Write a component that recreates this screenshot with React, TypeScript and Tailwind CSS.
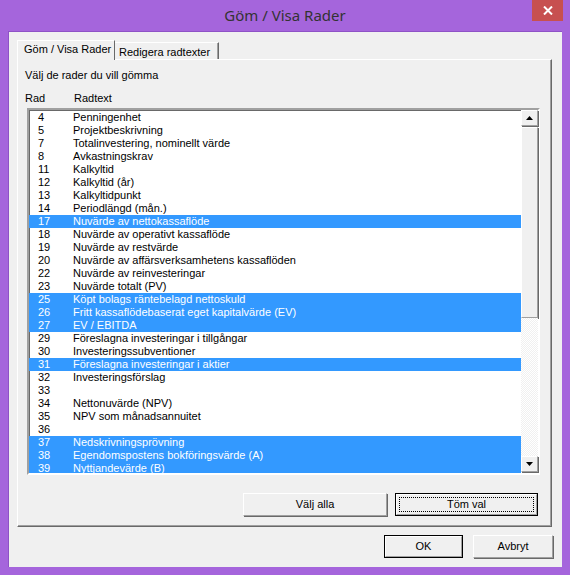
import { type ReactNode } from "react";

type Row = { n: number; text: string; sel?: boolean };

const rows: Row[] = [
  { n: 4, text: "Penningenhet" },
  { n: 5, text: "Projektbeskrivning" },
  { n: 7, text: "Totalinvestering, nominellt värde" },
  { n: 8, text: "Avkastningskrav" },
  { n: 11, text: "Kalkyltid" },
  { n: 12, text: "Kalkyltid (år)" },
  { n: 13, text: "Kalkyltidpunkt" },
  { n: 14, text: "Periodlängd (mån.)" },
  { n: 17, text: "Nuvärde av nettokassaflöde", sel: true },
  { n: 18, text: "Nuvärde av operativt kassaflöde" },
  { n: 19, text: "Nuvärde av restvärde" },
  { n: 20, text: "Nuvärde av affärsverksamhetens kassaflöden" },
  { n: 22, text: "Nuvärde av reinvesteringar" },
  { n: 23, text: "Nuvärde totalt (PV)" },
  { n: 25, text: "Köpt bolags räntebelagd nettoskuld", sel: true },
  { n: 26, text: "Fritt kassaflödebaserat eget kapitalvärde (EV)", sel: true },
  { n: 27, text: "EV / EBITDA", sel: true },
  { n: 29, text: "Föreslagna investeringar i tillgångar" },
  { n: 30, text: "Investeringssubventioner" },
  { n: 31, text: "Föreslagna investeringar i aktier", sel: true },
  { n: 32, text: "Investeringsförslag" },
  { n: 33, text: "" },
  { n: 34, text: "Nettonuvärde (NPV)" },
  { n: 35, text: "NPV som månadsannuitet" },
  { n: 36, text: "" },
  { n: 37, text: "Nedskrivningsprövning", sel: true },
  { n: 38, text: "Egendomspostens bokföringsvärde (A)", sel: true },
  { n: 39, text: "Nyttjandevärde (B)", sel: true },
];

// classic raised 3D button face
function Raised({ className = "", children }: { className?: string; children?: ReactNode }) {
  return (
    <div
      className={`bg-[#f0f0f0] border border-t-white border-l-white border-r-[#a0a0a0] border-b-[#a0a0a0] shadow-[1px_1px_0_#696969] ${className}`}
    >
      {children}
    </div>
  );
}

function Btn({ label, def, focus, className = "" }: { label: string; def?: boolean; focus?: boolean; className?: string }) {
  return (
    <div className={`h-[23px] ${def ? "border border-black" : ""} ${className}`}>
      <div
        className={`h-full bg-[#f0f0f0] border border-t-white border-l-white border-r-[#a0a0a0] border-b-[#a0a0a0] ${
          def ? "" : "shadow-[1px_1px_0_#696969]"
        } flex items-center justify-center p-[2px]`}
      >
        <div
          className={`w-full h-full flex items-center justify-center ${focus ? "border border-dotted border-black" : ""}`}
        >
          {label}
        </div>
      </div>
    </div>
  );
}

function Arrow({ up }: { up?: boolean }) {
  return (
    <svg width="7" height="4" viewBox="0 0 7 4">
      {up ? <polygon points="0,4 7,4 3.5,0" fill="#000" /> : <polygon points="0,0 7,0 3.5,4" fill="#000" />}
    </svg>
  );
}

export default function App() {
  return (
    <div
      className="w-[570px] h-[575px] bg-[#a565dc] flex flex-col text-[11px] text-black"
      style={{ fontFamily: '"Liberation Sans", Arial, sans-serif' }}
    >
      {/* Title bar */}
      <div className="h-[31px] flex items-start shrink-0">
        <div className="w-[38px]" />
        <div
          className="flex-1 text-center text-[15px] leading-[30px] text-[#333]"
          style={{ fontFamily: '"Noto Sans", "Open Sans", sans-serif' }}
        >
          Göm / Visa Rader
        </div>
        <div className="w-[31px] h-[21px] mr-[7px] bg-[#c75050] flex items-center justify-center">
          <svg width="10" height="9" viewBox="0 0 10 9">
            <path d="M1 0.5 L9 8.5 M9 0.5 L1 8.5" stroke="#fff" strokeWidth="2" />
          </svg>
        </div>
      </div>

      {/* Client area */}
      <div className="ml-[8px] w-[554px] h-[536px] bg-[#f0f0f0] border-t border-l border-[#8e52c6] flex flex-col">
        {/* Tabs */}
        <div className="flex items-end ml-[8px] mt-[8px] h-[19px]">
          <div className="relative z-10 h-[20px] -mb-px w-[98px] bg-[#f0f0f0] border-t border-l border-white border-r border-r-[#696969] pl-[6px] leading-[17px]">
            Göm / Visa Rader
          </div>
          <div className="h-[17px] w-[104px] border-t border-white border-r border-r-[#696969] shadow-[inset_-1px_0_0_#a0a0a0] pl-[4px] leading-[16px] pt-[1px]">
            Redigera radtexter
          </div>
        </div>

        {/* Tab panel */}
        <div className="ml-[8px] w-[535px] h-[468px] border border-t-white border-l-white border-r-[#696969] border-b-[#696969] shadow-[inset_-1px_-1px_0_#a0a0a0] flex flex-col">
          <div className="mt-[9px] ml-[7px] leading-[13px]">Välj de rader du vill gömma</div>
          <div className="mt-[10px] ml-[7px] flex leading-[13px]">
            <div className="w-[49px]">Rad</div>
            <div>Radtext</div>
          </div>

          {/* List box */}
          <div className="mt-[3px] ml-[9px] w-[513px] h-[367px] border-2 border-t-[#a0a0a0] border-l-[#a0a0a0] border-r-white border-b-white shadow-[inset_1px_1px_0_#696969] bg-white flex">
            <div className="flex-1 overflow-hidden pt-px">
              {rows.map((r) => (
                <div
                  key={r.n}
                  className={`h-[13px] leading-[13px] flex whitespace-nowrap ${r.sel ? "bg-[#3399ff] text-white" : ""}`}
                >
                  <div className="w-[44px] pl-[9px]">{r.n}</div>
                  <div>{r.text}</div>
                </div>
              ))}
            </div>
            {/* Scrollbar */}
            <div className="w-[17px] flex flex-col">
              <Raised className="h-[16px] flex items-center justify-center">
                <Arrow up />
              </Raised>
              <Raised className="h-[191px] mt-px" />
              <div className="flex-1 bg-[repeating-conic-gradient(#ffffff_0_25%,#f0f0f0_0_50%)] bg-[length:2px_2px]" />
              <Raised className="h-[16px] mb-px flex items-center justify-center">
                <Arrow />
              </Raised>
            </div>
          </div>

          {/* Select buttons */}
          <div className="mt-[18px] ml-[225px] flex gap-[8px]">
            <Btn label="Välj alla" className="w-[144px]" />
            <Btn label="Töm val" def focus className="w-[143px]" />
          </div>
        </div>

        {/* Dialog buttons */}
        <div className="mt-[8px] flex justify-end gap-[10px] mr-[9px]">
          <Btn label="OK" def className="w-[79px]" />
          <Btn label="Avbryt" className="w-[80px]" />
        </div>
      </div>
    </div>
  );
}
